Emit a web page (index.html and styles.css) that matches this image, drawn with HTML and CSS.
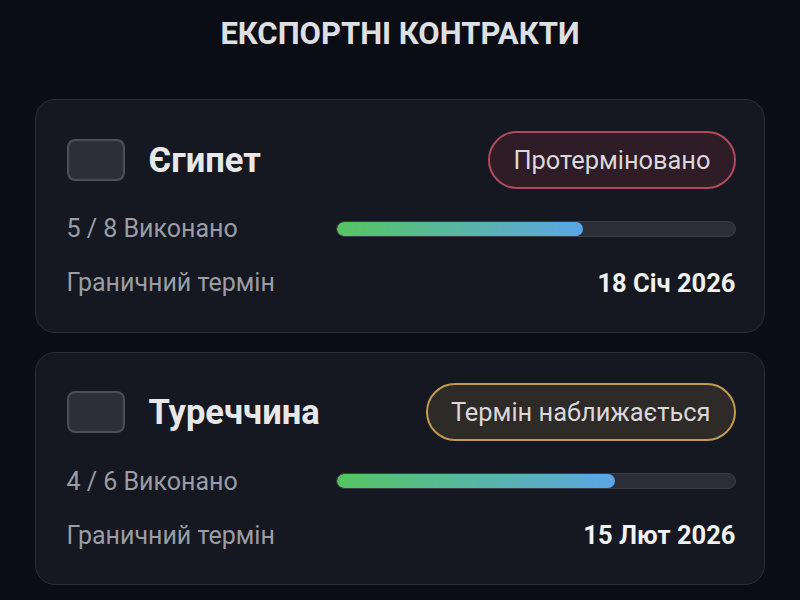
FILE: index.html
```html
<!DOCTYPE html>
<html lang="uk">
<head>
<meta charset="utf-8">
<link rel="stylesheet" href="styles.css">
</head>
<body>
<main class="page">
  <h1 class="title">ЕКСПОРТНІ КОНТРАКТИ</h1>
  <section class="card">
    <div class="head">
      <div class="check"></div>
      <h2 class="country">Єгипет</h2>
      <span class="badge badge-red">Протерміновано</span>
    </div>
    <div class="row">
      <span class="muted">5 / 8 Виконано</span>
      <div class="track"><div class="fill" style="width:62%"></div></div>
    </div>
    <div class="row">
      <span class="muted">Граничний термін</span>
      <span class="date">18 Січ 2026</span>
    </div>
  </section>
  <section class="card">
    <div class="head">
      <div class="check"></div>
      <h2 class="country">Туреччина</h2>
      <span class="badge badge-gold">Термін наближається</span>
    </div>
    <div class="row">
      <span class="muted">4 / 6 Виконано</span>
      <div class="track"><div class="fill" style="width:70%"></div></div>
    </div>
    <div class="row">
      <span class="muted">Граничний термін</span>
      <span class="date">15 Лют 2026</span>
    </div>
  </section>
</main>
</body>
</html>
```

FILE: styles.css
```css
html, body {
  margin: 0;
  padding: 0;
  background: #0a0d14;
  font-family: Roboto, "Noto Sans", sans-serif;
  color: #e6e6e8;
}
.page {
  padding: 14px 35px 0;
  display: flex;
  flex-direction: column;
  gap: 19px;
}
.title {
  margin: 0 0 26px;
  text-align: center;
  font-size: 31px;
  font-weight: 700;
  line-height: 40px;
  color: #dedfe2;
}
.card {
  background: #151820;
  border: 1.5px solid #2b2e37;
  border-radius: 20px;
  padding: 30.5px 28.5px 34px 30.5px;
  display: flex;
  flex-direction: column;
}
.head {
  display: flex;
  align-items: center;
  height: 58px;
}
.check {
  width: 54px;
  height: 38px;
  border: 2px solid #4b4e56;
  background: #2c2f37;
  border-radius: 8px;
}
.country {
  margin: 0 0 0 24px;
  font-size: 34.5px;
  font-weight: 700;
  color: #e8e8ea;
  flex: 1;
}
.badge {
  height: 54px;
  border-radius: 29px;
  padding: 0 23px;
  display: flex;
  align-items: center;
  font-size: 25.4px;
  color: #dcd7da;
}
.badge-red {
  border: 2px solid #b04a5c;
  background: #2e1c26;
}
.badge-gold {
  border: 2px solid #c29a52;
  background: #2e2a27;
}
.row {
  display: flex;
  align-items: center;
  justify-content: space-between;
  height: 30px;
}
.head + .row { margin-top: 25px; }
.row + .row { margin-top: 24px; }
.muted {
  font-size: 25px;
  color: #9b9da4;
}
.track {
  width: 398px;
  height: 14px;
  border: 1.5px solid #3a3d46;
  background: #2b2e37;
  border-radius: 9px;
  overflow: hidden;
}
.fill {
  height: 100%;
  border-radius: 9px;
  background: linear-gradient(90deg, #55c561, #5ba6e6);
}
.date {
  font-size: 25.5px;
  font-weight: 700;
  color: #f2f2f4;
}
```
